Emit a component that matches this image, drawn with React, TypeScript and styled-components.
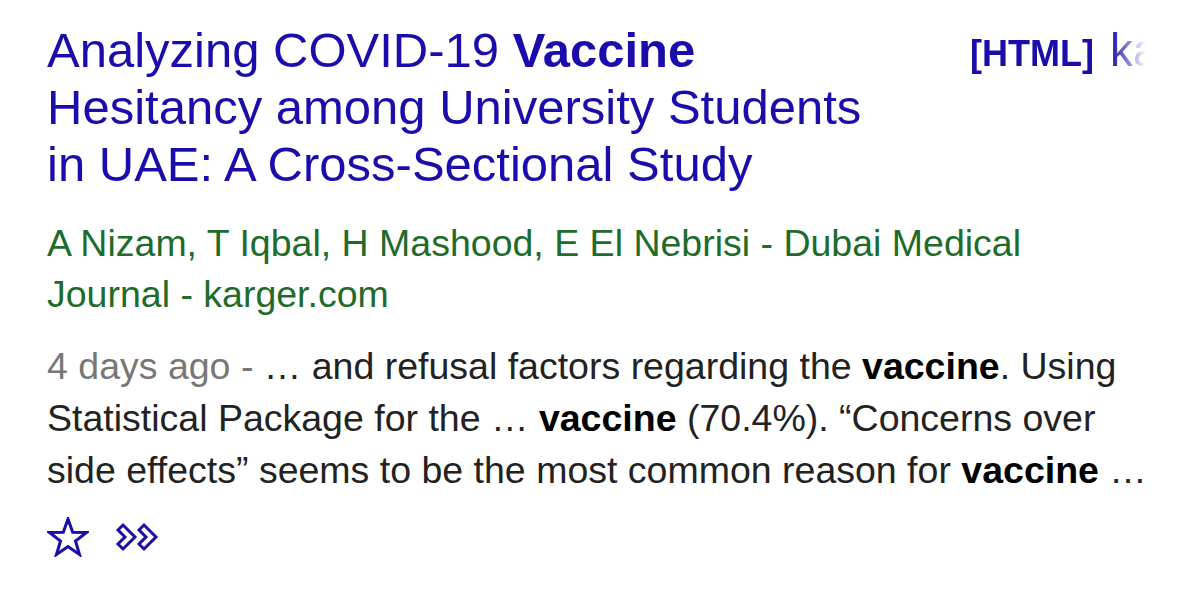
import styled, { createGlobalStyle } from "styled-components";

const GlobalStyle = createGlobalStyle`
  body {
    margin: 0;
    background: #ffffff;
    font-family: "Liberation Sans", Arial, sans-serif;
  }
`;

const Result = styled.div`
  width: 1200px;
  height: 605px;
  box-sizing: border-box;
  padding: 22px 0 0 47px;
  background: #ffffff;
  overflow: hidden;
`;

const Top = styled.div`
  display: flex;
  align-items: flex-start;
`;

const Title = styled.h3`
  margin: 0;
  width: 845px;
  flex-shrink: 0;
  font-size: 49px;
  line-height: 57px;
  font-weight: normal;
  color: #1a0dab;

  b {
    font-weight: bold;
  }
`;

const Side = styled.div`
  display: flex;
  align-items: baseline;
  gap: 16px;
  width: 176px;
  margin-left: 78px;
  overflow: hidden;
  white-space: nowrap;
  line-height: 57px;
  -webkit-mask-image: linear-gradient(90deg, #000 80%, transparent 100%);
  mask-image: linear-gradient(90deg, #000 80%, transparent 100%);
`;

const Format = styled.span`
  font-size: 36px;
  font-weight: bold;
  color: #1a0dab;
`;

const Source = styled.span`
  font-size: 46px;
  color: #1a0dab;
`;

const Authors = styled.div`
  margin-top: 25px;
  width: 1070px;
  font-size: 37.5px;
  line-height: 51px;
  color: #1e6b2b;
`;

const Snippet = styled.div`
  margin-top: 20px;
  width: 1118px;
  font-size: 37.5px;
  line-height: 52px;
  color: #222222;

  b {
    font-weight: bold;
    color: #000000;
  }
`;

const Age = styled.span`
  color: #777777;
`;

const Actions = styled.div`
  display: flex;
  align-items: center;
  gap: 26px;
  margin-top: 21px;
`;

const IconButton = styled.span`
  display: flex;
  align-items: center;
  color: #1a0dab;
`;

const StarIcon = () => (
  <svg width="42" height="40" viewBox="0 0 42 40">
    <polygon
      points="21,2 25.7,15.3 39.5,15.5 28.5,24 32.5,37.5 21,29.5 9.5,37.5 13.5,24 2.5,15.5 16.3,15.3"
      fill="none"
      stroke="currentColor"
      strokeWidth="3"
    />
  </svg>
);

const CiteIcon = () => (
  <svg width="46" height="30" viewBox="0 0 46 30">
    <polygon
      points="3,8 8,3 20,15 8,27 3,22 10,15"
      fill="none"
      stroke="currentColor"
      strokeWidth="3"
    />
    <polygon
      points="24,8 29,3 41,15 29,27 24,22 31,15"
      fill="none"
      stroke="currentColor"
      strokeWidth="3"
    />
  </svg>
);

export default function App() {
  return (
    <>
      <GlobalStyle />
      <Result>
        <Top>
          <Title>
            Analyzing COVID-19 <b>Vaccine</b> Hesitancy among University
            Students in UAE: A Cross-Sectional Study
          </Title>
          <Side>
            <Format>[HTML]</Format>
            <Source>karger.com</Source>
          </Side>
        </Top>
        <Authors>
          A Nizam, T Iqbal, H Mashood, E El Nebrisi - Dubai Medical Journal -
          karger.com
        </Authors>
        <Snippet>
          <Age>4 days ago - </Age>… and refusal factors regarding the{" "}
          <b>vaccine</b>. Using Statistical Package for the … <b>vaccine</b>{" "}
          (70.4%). “Concerns over side effects” seems to be the most common
          reason for <b>vaccine</b> …
        </Snippet>
        <Actions>
          <IconButton>
            <StarIcon />
          </IconButton>
          <IconButton>
            <CiteIcon />
          </IconButton>
        </Actions>
      </Result>
    </>
  );
}
